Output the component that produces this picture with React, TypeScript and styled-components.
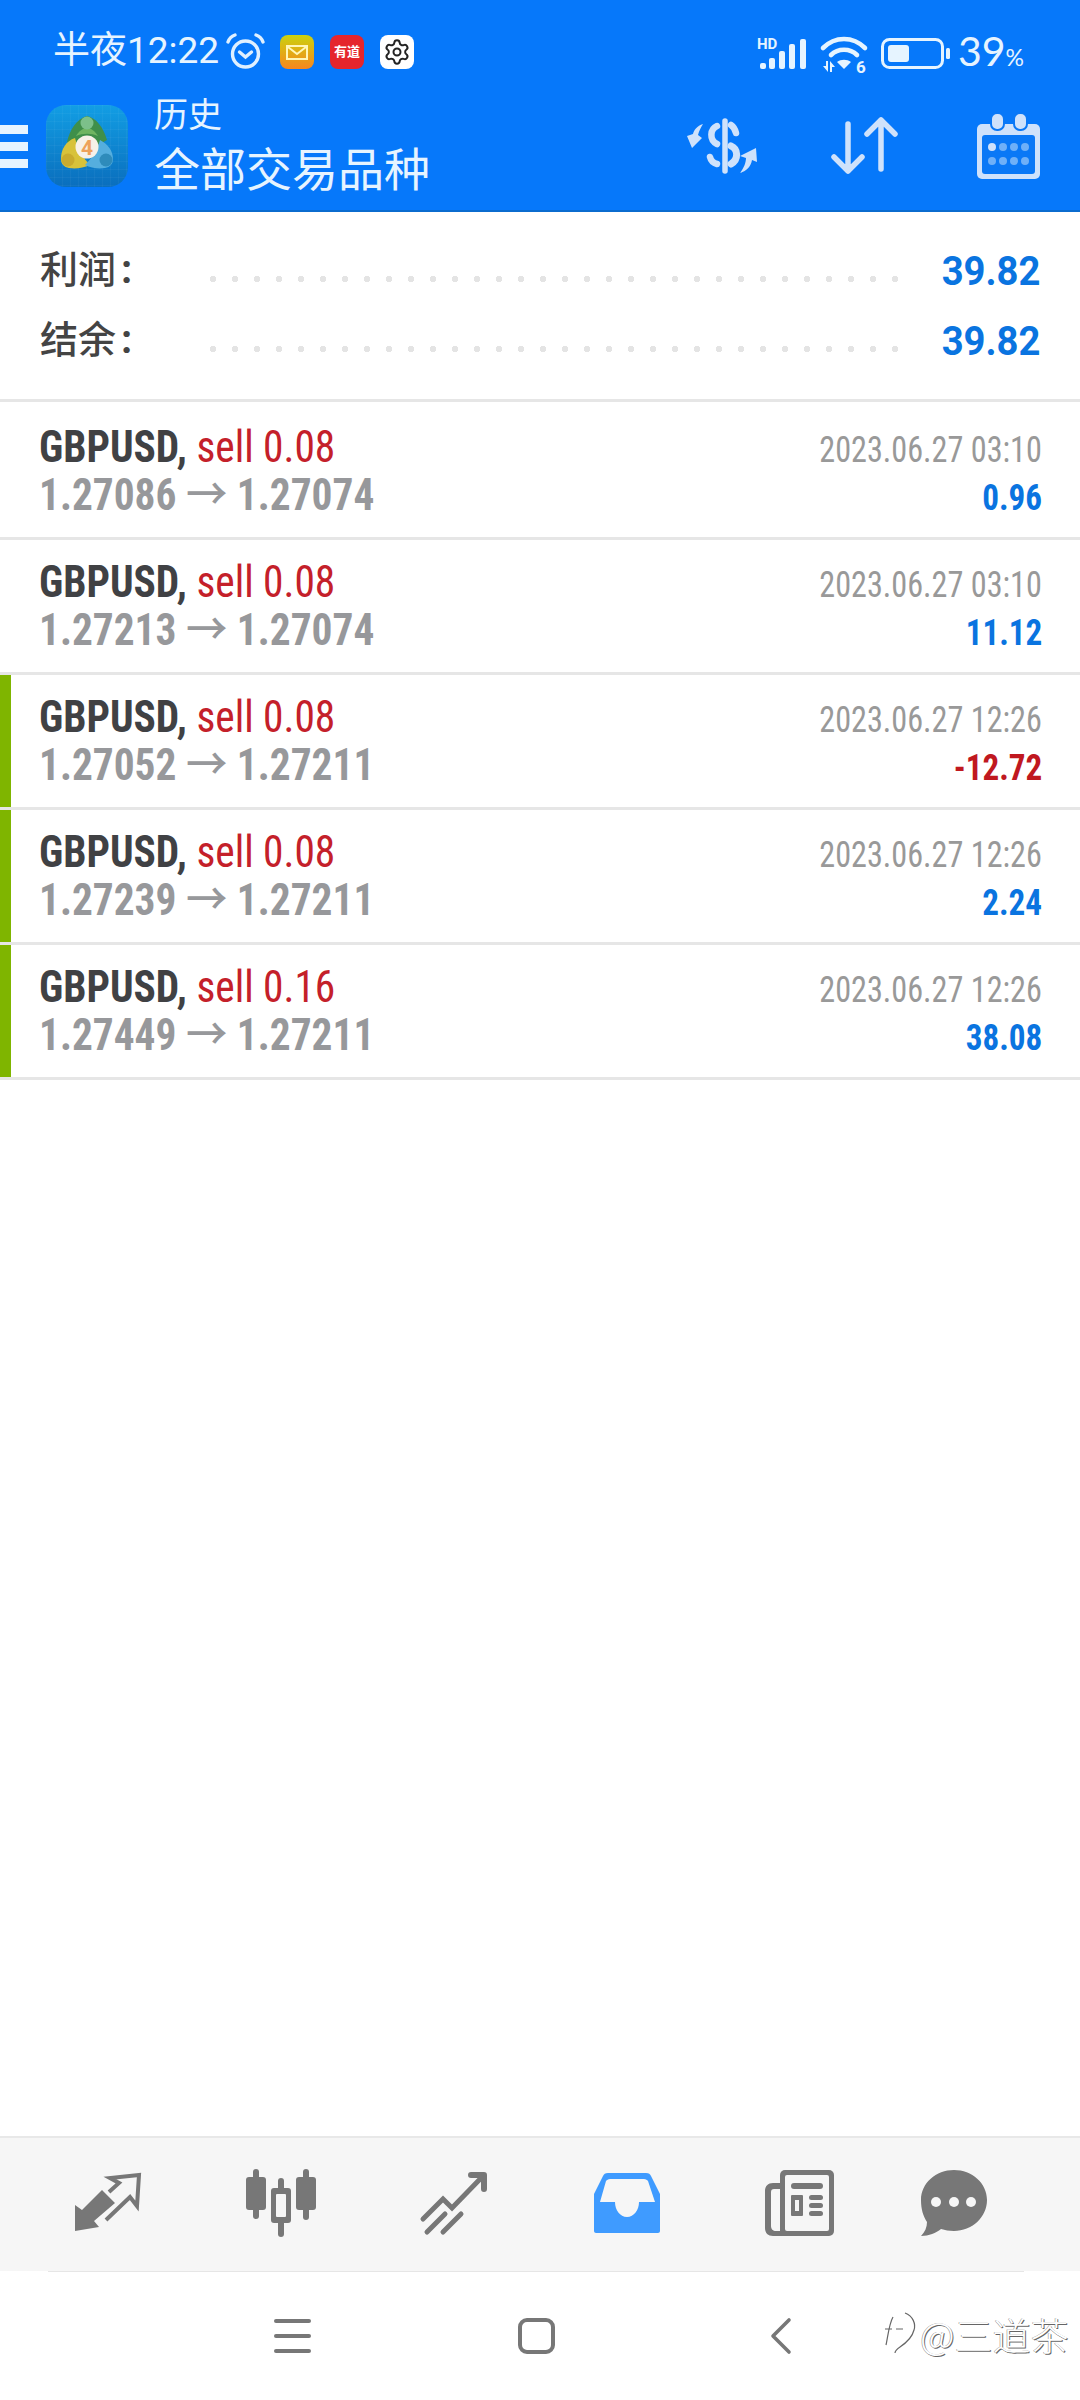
import {FC} from "react";
import styled, {createGlobalStyle} from "styled-components";
import {Settings} from "lucide-react";

const GlobalStyle = createGlobalStyle`
    html, body {
        margin: 0;
        background: #fff;
    }
    * {
        box-sizing: border-box;
    }
    svg {
        overflow: visible;
        flex-shrink: 0;
    }
`;

const cjk = `Roboto, "Noto Sans CJK SC", sans-serif`;

const trades = [
    {size: '0.08', from: '1.27086', to: '1.27074', time: '2023.06.27 03:10', profit: '0.96', marked: false},
    {size: '0.08', from: '1.27213', to: '1.27074', time: '2023.06.27 03:10', profit: '11.12', marked: false},
    {size: '0.08', from: '1.27052', to: '1.27211', time: '2023.06.27 12:26', profit: '-12.72', marked: true},
    {size: '0.08', from: '1.27239', to: '1.27211', time: '2023.06.27 12:26', profit: '2.24', marked: true},
    {size: '0.16', from: '1.27449', to: '1.27211', time: '2023.06.27 12:26', profit: '38.08', marked: true},
];

const Logo: FC = () => (
    <svg width="82" height="82" viewBox="0 0 82 82">
        <defs>
            <linearGradient id="logoBg" x1="0" y1="0" x2="0" y2="1">
                <stop offset="0" stopColor="#129ee4"/>
                <stop offset="1" stopColor="#0a6ebd"/>
            </linearGradient>
            <pattern id="logoGrid" width="8" height="8" patternUnits="userSpaceOnUse">
                <path d="M8 0H0v8" fill="none" stroke="#ffffff" strokeOpacity="0.07" strokeWidth="1"/>
            </pattern>
        </defs>
        <rect width="82" height="82" rx="20" fill="url(#logoBg)"/>
        <rect width="82" height="82" rx="20" fill="url(#logoGrid)"/>
        <path d="M41 11c-11 3-17 14-20 26l10 4c6-4 14-4 21-1l9-5C58 24 51 13 41 11z" fill="#3f8f4a"/>
        <path d="M30 31c3-5 7-8 11-8s8 3 11 8c-7-3-15-3-22 0z" fill="#6fb561"/>
        <circle cx="41" cy="18" r="6.5" fill="#7cc08a"/>
        <path d="M29 33c-9 3-14 11-14 21 0 5 3 8 8 9 7 1 14 0 21-3-7-7-12-16-15-27z" fill="#d8c23a"/>
        <circle cx="22" cy="55" r="6.5" fill="#c9ab2e"/>
        <path d="M54 35c8 4 13 11 13 19 0 5-3 8-8 9-7 1-14 0-20-3 7-7 12-15 15-25z" fill="#55aede"/>
        <circle cx="60" cy="55" r="6.5" fill="#2e8bbb"/>
        <circle cx="41" cy="42" r="11.5" fill="#f7f1e8"/>
        <text x="41" y="49.5" textAnchor="middle" fontFamily="Roboto, sans-serif" fontWeight="700" fontSize="21" fill="#eea25a">4</text>
    </svg>
);

const AlarmIcon: FC = () => (
    <svg width="39" height="36" viewBox="0 0 39 36" fill="none" stroke="#dff0ff" strokeWidth="3.4" strokeLinecap="round">
        <circle cx="19.5" cy="21" r="13"/>
        <path d="M13.5 19l6 5 6-5"/>
        <path d="M2 9c1-3 4-6 7-7M37 9c-1-3-4-6-7-7"/>
    </svg>
);

const MailBadge: FC = () => (
    <svg width="34" height="34" viewBox="0 0 34 34">
        <defs>
            <linearGradient id="mailBg" x1="0" y1="0" x2="0" y2="1">
                <stop offset="0" stopColor="#cbd20e"/>
                <stop offset="1" stopColor="#f7861f"/>
            </linearGradient>
        </defs>
        <rect width="34" height="34" rx="8" fill="url(#mailBg)"/>
        <rect x="7" y="11" width="20" height="13" fill="none" stroke="#fff6b8" strokeWidth="2"/>
        <path d="M8 12l9 7 9-7" fill="none" stroke="#fff6b8" strokeWidth="2"/>
    </svg>
);

const SignalIcon: FC = () => (
    <svg width="50" height="32" viewBox="0 0 50 32">
        <text x="0" y="11" fontFamily="Roboto, sans-serif" fontWeight="700" fontSize="15" fill="#e6f4ff">HD</text>
        <g fill="#e6f4ff">
            <rect x="3" y="25" width="6" height="6" rx="2"/>
            <rect x="12" y="20" width="6" height="11" rx="2"/>
            <rect x="22" y="13" width="6" height="18" rx="2"/>
            <rect x="32" y="6" width="6" height="25" rx="2"/>
            <rect x="43" y="1" width="6" height="30" rx="2"/>
        </g>
    </svg>
);

const WifiIcon: FC = () => (
    <svg width="48" height="37" viewBox="0 0 48 37" fill="none" stroke="#e6f4ff" strokeWidth="4.6" strokeLinecap="round">
        <path d="M3 12C15 0 33 0 45 12"/>
        <path d="M11 19c7-7 19-7 26 0"/>
        <path d="M24 33l-7-7c4-3 10-3 14 0z" fill="#e6f4ff" stroke="none"/>
        <path d="M3 30h3v-5h2v11zM10 36v-11l5 6h-3v5z" fill="#e6f4ff" stroke="none"/>
        <text x="36" y="37" fontFamily="Roboto, sans-serif" fontWeight="700" fontSize="17" fill="#e6f4ff" stroke="none">6</text>
    </svg>
);

const BatteryIcon: FC = () => (
    <svg width="70" height="32" viewBox="0 0 70 32">
        <rect x="1.5" y="1.5" width="60" height="28" rx="7" fill="none" stroke="#e6f4ff" strokeWidth="3"/>
        <rect x="7" y="7" width="21" height="17" rx="3" fill="#e6f4ff"/>
        <rect x="65" y="10" width="4" height="11" rx="1.5" fill="#e6f4ff"/>
    </svg>
);

const DollarIcon: FC = () => (
    <svg width="73" height="56" viewBox="0 0 73 56" fill="none" stroke="#cfe2fb" strokeWidth="6.5" strokeLinecap="round">
        <path d="M39 3v50" strokeWidth="5.5"/>
        <path d="M31 8c-7 3-8 14 0 18"/>
        <path d="M45 7c3 2 4 4 5 8"/>
        <path d="M45 28c7 3 8 13 0 18" strokeWidth="7"/>
        <path d="M31 46c-4-1-6-3-7-7"/>
        <path d="M17 6C11 8 8 12 7 16l-6 2 5 12 10-10-4-3c1-4 3-8 5-11z" fill="#cfe2fb" stroke="none"/>
        <path d="M54 55c4-5 6-11 6-15l-6-2 16-8 1 14-5-2c-1 6-5 11-12 13z" fill="#cfe2fb" stroke="none"/>
    </svg>
);

const SortIcon: FC = () => (
    <svg width="67" height="58" viewBox="0 0 67 58" fill="none" stroke="#cfe2fb" strokeWidth="5.5" strokeLinecap="round" strokeLinejoin="round">
        <path d="M17 7v47M3 40l14 14 14-14"/>
        <path d="M50 3v49M36 17L50 3l14 14"/>
    </svg>
);

const CalendarIcon: FC = () => (
    <svg width="63" height="66" viewBox="0 0 63 66">
        <rect y="11" width="63" height="55" rx="5" fill="#cfe2fb"/>
        <rect x="5" y="22" width="53" height="39" rx="3" fill="#0a78f6"/>
        <rect x="14" y="0" width="13" height="17" rx="6" fill="#cfe2fb" stroke="#0a78f6" strokeWidth="2"/>
        <rect x="37" y="0" width="13" height="17" rx="6" fill="#cfe2fb" stroke="#0a78f6" strokeWidth="2"/>
        <circle cx="15" cy="34" r="4" fill="#cfe2fb"/>
        {[26, 37, 48].map(x => <circle key={x} cx={x} cy="34" r="4" fill="#6fb0f8"/>)}
        {[15, 26, 37, 48].map(x => <circle key={x} cx={x} cy="48" r="4" fill="#6fb0f8"/>)}
    </svg>
);

const TradeIcon: FC = () => (
    <svg width="66" height="59" viewBox="0 0 66 59">
        <path d="M0 32l7 5L27 17l13 13-21 18 5 6L0 58z" fill="#777"/>
        <path d="M34 19l10-9-9-5 29-3-2 31-7-9-24 23" fill="none" stroke="#777" strokeWidth="4"/>
    </svg>
);

const CandlesIcon: FC = () => (
    <svg width="70" height="68" viewBox="0 0 70 68" fill="#777">
        <rect x="7" y="0" width="6" height="50" rx="3"/>
        <rect x="0" y="8" width="20" height="33" rx="3"/>
        <rect x="32" y="9" width="6" height="59" rx="3"/>
        <rect x="25" y="19" width="20" height="35" rx="3"/>
        <rect x="30" y="25" width="10" height="23" rx="1" fill="#f6f6f6"/>
        <rect x="57" y="0" width="6" height="51" rx="3"/>
        <rect x="50" y="8" width="20" height="33" rx="3"/>
    </svg>
);

const TrendIcon: FC = () => (
    <svg width="65" height="62" viewBox="0 0 65 62" fill="none" stroke="#777" strokeWidth="5" strokeLinecap="round">
        <path d="M2 47l20-20 9 9 31-32"/>
        <path d="M50 3h13v14" strokeWidth="6" strokeLinejoin="round"/>
        <path d="M6 60l18-18M22 60l18-18"/>
    </svg>
);

const InboxIcon: FC = () => (
    <svg width="66" height="60" viewBox="0 0 66 60">
        <path d="M14 0h38c3 0 4 1 5 3l9 18v37c0 1-1 2-2 2H2c-1 0-2-1-2-2V21L9 3c1-2 2-3 5-3z" fill="#3f9bff"/>
        <path d="M16 6h34c2 0 3 1 4 2l7 21H45c0 8-5 15-12 15s-12-7-12-15H6l6-21c1-1 2-2 4-2z" fill="#f6f6f6"/>
    </svg>
);

const NewsIcon: FC = () => (
    <svg width="69" height="66" viewBox="0 0 69 66">
        <rect x="15" y="0" width="54" height="66" rx="5" fill="#777"/>
        <rect x="20" y="5" width="44" height="56" rx="2" fill="#f6f6f6"/>
        <path d="M15 13H8c-5 0-8 3-8 8v37c0 5 3 8 8 8h24v-5H11c-3 0-5-2-5-5V22c0-2 1-3 3-3h6z" fill="#777"/>
        <rect x="26" y="13" width="32" height="6" rx="3" fill="#777"/>
        <rect x="26" y="25" width="12" height="21" rx="1" fill="#777"/>
        <rect x="30" y="30" width="4" height="11" fill="#f6f6f6"/>
        <rect x="44" y="25" width="14" height="5" rx="2.5" fill="#777"/>
        <rect x="44" y="33" width="14" height="5" rx="2.5" fill="#777"/>
        <rect x="44" y="41" width="14" height="5" rx="2.5" fill="#777"/>
    </svg>
);

const ChatIcon: FC = () => (
    <svg width="66" height="66" viewBox="0 0 66 66">
        <path d="M33 0c18 0 33 13 33 30S51 61 33 61c-5 0-9-1-13-2-5 4-12 7-20 7 4-4 6-9 6-14C2 46 0 39 0 30 0 13 15 0 33 0z" fill="#777"/>
        <circle cx="15" cy="32" r="5" fill="#f6f6f6"/>
        <circle cx="33" cy="32" r="5" fill="#f6f6f6"/>
        <circle cx="50" cy="32" r="5" fill="#f6f6f6"/>
    </svg>
);

const tabs = [
    {key: 'quotes', icon: <TradeIcon/>},
    {key: 'charts', icon: <CandlesIcon/>},
    {key: 'trade', icon: <TrendIcon/>},
    {key: 'history', icon: <InboxIcon/>},
    {key: 'news', icon: <NewsIcon/>},
    {key: 'chat', icon: <ChatIcon/>},
];

export default function App() {
    return (
        <Screen>
            <GlobalStyle/>
            <Header>
                <StatusBar>
                    <Clock>半夜12:22</Clock>
                    <AlarmIcon/>
                    <Badges>
                        <MailBadge/>
                        <Youdao>有道</Youdao>
                        <GearBadge><Settings size={28} color="#222" strokeWidth={1.7}/></GearBadge>
                    </Badges>
                    <StatusRight>
                        <SignalIcon/>
                        <WifiIcon/>
                        <BatteryIcon/>
                        <Percent>39<small>%</small></Percent>
                    </StatusRight>
                </StatusBar>
                <AppBar>
                    <MenuButton><i/><i/><i/></MenuButton>
                    <Logo/>
                    <Titles>
                        <SubTitle>历史</SubTitle>
                        <Title>全部交易品种</Title>
                    </Titles>
                    <Actions>
                        <DollarIcon/>
                        <SortIcon/>
                        <CalendarSlot><CalendarIcon/></CalendarSlot>
                    </Actions>
                </AppBar>
            </Header>

            <Summary>
                <SummaryRow>
                    <SummaryLabel>利润<b>:</b></SummaryLabel>
                    <Dots/>
                    <SummaryValue>39.82</SummaryValue>
                </SummaryRow>
                <SummaryRow>
                    <SummaryLabel>结余<b>:</b></SummaryLabel>
                    <Dots/>
                    <SummaryValue>39.82</SummaryValue>
                </SummaryRow>
            </Summary>

            <TradeList>
                {trades.map(t => (
                    <TradeRow key={t.from} $marked={t.marked}>
                        <Side>
                            <Line>
                                <Symbol>GBPUSD,</Symbol> <Sell>sell {t.size}</Sell>
                            </Line>
                            <Prices>{t.from} <Arrow>→</Arrow> {t.to}</Prices>
                        </Side>
                        <Side $right>
                            <Time>{t.time}</Time>
                            <Profit $loss={t.profit.startsWith('-')}>{t.profit}</Profit>
                        </Side>
                    </TradeRow>
                ))}
            </TradeList>

            <TabBar>
                {tabs.map(({key, icon}) => <Tab key={key}>{icon}</Tab>)}
            </TabBar>

            <NavBar>
                <NavMenu><i/><i/><i/></NavMenu>
                <NavHome/>
                <svg width="22" height="36" viewBox="0 0 22 36" fill="none" stroke="#777" strokeWidth="3.6" strokeLinecap="round" strokeLinejoin="round">
                    <path d="M19 2L3 18l16 16"/>
                </svg>
                <Watermark>
                    <svg width="34" height="44" viewBox="0 0 34 44" fill="none" stroke="#666" strokeWidth="1.2">
                        <path d="M22 1c8 3 11 11 9 17-2 8-8 13-14 17-3 2-5 4-5 6"/>
                        <path d="M10 5C6 12 5 24 3 33M2 17h7M13 17h7"/>
                    </svg>
                    <WatermarkText>@三道茶</WatermarkText>
                </Watermark>
            </NavBar>
        </Screen>
    );
}

const Screen = styled.div`
    width: 1080px;
    height: 2400px;
    display: flex;
    flex-direction: column;
    background: #fff;
    font-family: ${cjk};
    overflow: hidden;
`;

const Header = styled.header`
    height: 212px;
    background: #0678fa;
    border-bottom: 2px solid #0b6ccf;
    color: #e6f4ff;
`;

const StatusBar = styled.div`
    height: 88px;
    padding: 33px 59px 0 53px;
    display: flex;
    align-items: flex-start;
`;

const Clock = styled.span`
    font-size: 37px;
    line-height: 36px;
    margin-right: 8px;
    width: 165px;
    white-space: nowrap;
`;

const Badges = styled.div`
    display: flex;
    gap: 16px;
    margin-left: 15px;
    padding-top: 2px;
`;

const Youdao = styled.span`
    width: 34px;
    height: 34px;
    border-radius: 8px;
    background: #e5252c;
    color: #fff;
    font-size: 13px;
    font-weight: 700;
    line-height: 34px;
    text-align: center;
`;

const GearBadge = styled.span`
    width: 34px;
    height: 34px;
    border-radius: 8px;
    background: #fff;
    display: flex;
    align-items: center;
    justify-content: center;
`;

const StatusRight = styled.div`
    margin-left: auto;
    display: flex;
    align-items: center;
    gap: 13px;
`;

const Percent = styled.span`
    font-family: Lato, sans-serif;
    font-size: 41px;
    line-height: 36px;
    width: 63px;
    margin-left: -6px;
    white-space: nowrap;
    small {
        font-size: 23px;
    }
`;

const AppBar = styled.div`
    height: 122px;
    display: flex;
    align-items: center;
    padding: 0 40px 6px 0;
`;

const MenuButton = styled.div`
    width: 28px;
    margin-right: 18px;
    display: flex;
    flex-direction: column;
    gap: 8px;
    i {
        display: block;
        height: 9px;
        background: #e6f4ff;
    }
`;

const Titles = styled.div`
    margin: 3px 0 0 26px;
    display: flex;
    flex-direction: column;
`;

const SubTitle = styled.span`
    font-size: 34px;
    line-height: 42px;
    margin-bottom: 3px;
`;

const Title = styled.span`
    font-size: 46px;
    line-height: 62px;
`;

const Actions = styled.div`
    margin-left: auto;
    display: flex;
    align-items: center;
    gap: 72px;
`;

const CalendarSlot = styled.div`
    margin-left: 7px;
    display: flex;
`;

const Summary = styled.section`
    height: 187px;
    padding-top: 24px;
    display: flex;
    flex-direction: column;
`;

const SummaryRow = styled.div`
    height: 70px;
    padding: 0 40px;
    display: flex;
    align-items: center;
`;

const SummaryLabel = styled.span`
    font-family: "Noto Sans CJK SC", sans-serif;
    font-size: 38px;
    line-height: 40px;
    font-weight: 500;
    color: #444;
    width: 170px;
    margin-top: -6px;
    b {
        font-family: Roboto, sans-serif;
        font-weight: 700;
        font-size: 40px;
        margin-left: 5px;
    }
`;

const Dots = styled.span`
    width: 692px;
    height: 6px;
    margin-top: 16px;
    background-image: radial-gradient(circle at 3px 3px, #e4e4e4 3px, transparent 3.4px);
    background-size: 22px 6px;
    background-repeat: repeat-x;
`;

const SummaryValue = styled.span`
    margin-left: auto;
    font-size: 40px;
    font-weight: 700;
    color: #0a74e0;
    transform: scaleX(.955);
    transform-origin: right;
`;

const TradeList = styled.main`
    flex: 1;
    border-top: 3px solid #e6e6e6;
`;

const TradeRow = styled.div<{$marked: boolean}>`
    height: 135px;
    border-bottom: 3px solid #e6e6e6;
    background: ${p => p.$marked ? 'linear-gradient(#7fb500, #7fb500) no-repeat left / 11px 100%' : 'none'};
    padding: 17px 38px 0 39px;
    display: flex;
    justify-content: space-between;
    &:first-child {
        height: 138px;
        padding-top: 20px;
    }
`;

const Side = styled.div<{$right?: boolean}>`
    display: flex;
    flex-direction: column;
    align-items: ${p => p.$right ? 'flex-end' : 'flex-start'};
    padding-top: ${p => p.$right ? '3px' : '0'};
    font-stretch: 75%;
`;

const Line = styled.div`
    font-size: 44px;
    line-height: 50px;
    white-space: nowrap;
    transform: scaleX(.94);
    transform-origin: left;
`;

const Symbol = styled.span`
    font-weight: 700;
    color: #404144;
`;

const Sell = styled.span`
    color: #c4202a;
`;

const Prices = styled.div`
    font-size: 44px;
    line-height: 46px;
    font-weight: 700;
    color: #97989b;
    white-space: nowrap;
    transform: scaleX(.94);
    transform-origin: left;
`;

const Arrow = styled.span`
    font-weight: 500;
`;

const Time = styled.div`
    font-size: 37px;
    line-height: 50px;
    color: #999;
    white-space: nowrap;
    transform: scaleX(.87);
    transform-origin: right;
`;

const Profit = styled.div<{$loss: boolean}>`
    font-size: 36px;
    line-height: 46px;
    font-weight: 700;
    color: ${p => p.$loss ? '#c0181f' : '#0a74e0'};
    transform: scaleX(.92);
    transform-origin: right;
`;

const TabBar = styled.nav`
    height: 135px;
    background: #f6f6f6;
    border-top: 2px solid #e8e8e8;
    padding: 0 0 4px 21px;
    display: grid;
    grid-template-columns: repeat(5, 173px) 136px;
`;

const Tab = styled.div`
    display: flex;
    align-items: center;
    justify-content: center;
`;

const NavBar = styled.div`
    position: relative;
    height: 129px;
    display: flex;
    align-items: center;
    padding: 0 0 0 274px;
    &::before {
        content: "";
        position: absolute;
        top: 0;
        left: 48px;
        right: 56px;
        height: 1px;
        background: #e6e6e6;
    }
`;

const NavMenu = styled.div`
    width: 37px;
    margin-right: 207px;
    display: flex;
    flex-direction: column;
    gap: 11px;
    i {
        display: block;
        height: 4px;
        border-radius: 2px;
        background: #777;
    }
`;

const NavHome = styled.div`
    width: 37px;
    height: 36px;
    border: 4px solid #777;
    border-radius: 9px;
    margin-right: 215px;
`;

const Watermark = styled.div`
    position: absolute;
    left: 883px;
    top: 38px;
    display: flex;
    align-items: center;
    gap: 3px;
`;

const WatermarkText = styled.span`
    font-family: "Noto Sans CJK SC", sans-serif;
    font-size: 38px;
    line-height: 50px;
    font-weight: 300;
    color: #fff;
    text-shadow: 1px 1px 0 #666, -0.5px -0.5px 0 #888;
    white-space: nowrap;
`;
